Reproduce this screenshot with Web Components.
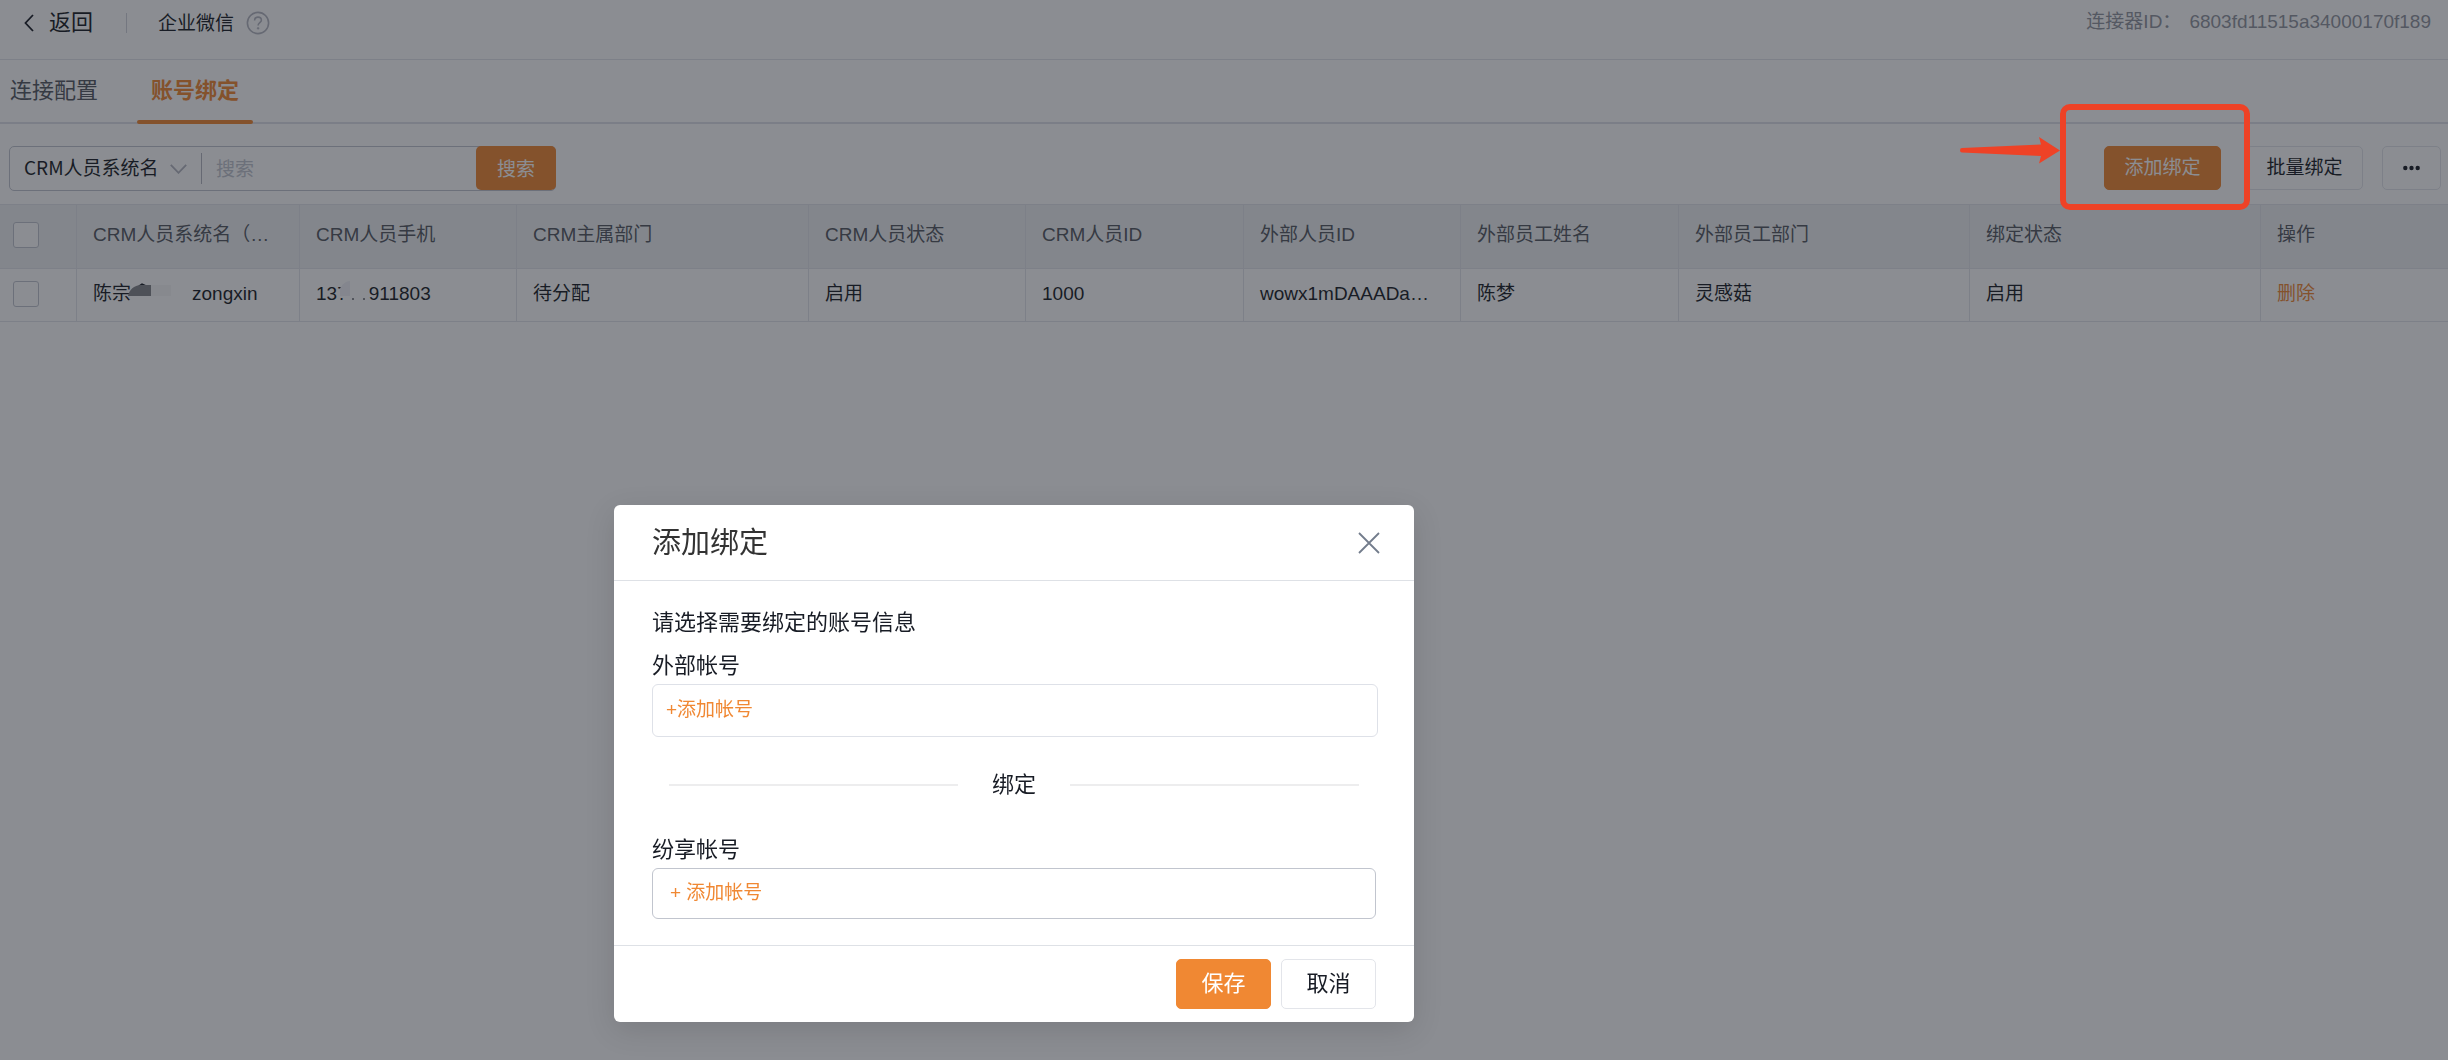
<!DOCTYPE html>
<html lang="zh-CN">
<head>
<meta charset="utf-8">
<title>账号绑定</title>
<style>
  html, body { margin: 0; height: 100%; }
  body {
    font: 19px/28px "Liberation Sans", "Noto Sans CJK SC", sans-serif;
    color: #181c25;
    background: #fff;
    --brand: #f08833;
    --line: #e3e5ea;
    --muted: #91959e;
    --cjk: "Noto Sans CJK SC", sans-serif;
  }
</style>
</head>
<body>
<connector-page></connector-page>

<script>
const define = (name, html, setup) => {
  const tpl = document.createElement('template');
  tpl.innerHTML = '<style>*{box-sizing:border-box}button,input,select{font:inherit;color:inherit;margin:0}button{cursor:pointer}</style>' + html;
  customElements.define(name, class extends HTMLElement {
    constructor() {
      super();
      this.attachShadow({ mode: 'open' }).append(tpl.content.cloneNode(true));
    }
    connectedCallback() { if (setup) setup(this, this.shadowRoot); }
  });
};

define('ui-button', `
  <style>
    :host { display: inline-flex; }
    button { display: flex; align-items: center; justify-content: center; height: 44px; min-width: 59px; padding: 0 19px; border: 1px solid var(--line); border-radius: 5px; background: #fff; white-space: nowrap; }
    :host([wide]) button { min-width: 117px; }
    :host([primary]) button { background: var(--brand); border-color: var(--brand); color: #fff; }
    :host([large]) button { height: 50px; min-width: 95px; font-size: 22px; }
    svg, ::slotted(svg) { display: block; }
  </style>
  <button type="button"><slot></slot></button>`,
  (el, root) => {
    if (el.hasAttribute('label')) root.querySelector('button').setAttribute('aria-label', el.getAttribute('label'));
  });

define('page-header', `
  <style>
    :host { display: flex; align-items: center; height: 60px; padding: 0 17px 14px 24px; border-bottom: 1px solid var(--line); }
    a { display: flex; align-items: center; gap: 15px; color: inherit; text-decoration: none; font-size: 22px; }
    i { width: 1px; height: 20px; background: #d0d3da; margin: 0 31px 0 33px; }
    h1 { margin: 0 12px 0 0; padding-top: 2px; font-size: 19px; font-weight: 400; }
    svg { display: block; }
    dl { display: flex; gap: 8px; margin: 0 0 0 auto; padding-bottom: 2px; color: var(--muted); }
    dd { margin: 0; }
  </style>
  <a href="#back">
    <svg width="10" height="18" viewBox="0 0 10 18" fill="none" stroke="currentColor" stroke-width="1.8"><path d="M9 1 1.5 9 9 17"/></svg>
    <span>返回</span>
  </a>
  <i></i>
  <h1>企业微信</h1>
  <svg width="24" height="24" viewBox="0 0 24 24" fill="none" stroke="#b4b6c0" stroke-width="1.6"><circle cx="12" cy="12" r="10.6"/><path d="M8.6 9.4c0-2 1.500-3.300 3.400-3.300s3.400 1.300 3.400 3.100c0 2.400-3.300 2.600-3.300 5.200"/><circle cx="12.100" cy="17.300" r=".9" fill="#b4b6c0" stroke-width=".6"/></svg>
  <dl><dt>连接器ID：</dt><dd>6803fd11515a34000170f189</dd></dl>`);

define('tab-bar', `
  <style>
    :host { display: block; box-shadow: inset 0 -2px #dee1e8; }
    nav { display: flex; gap: 25px; }
    a { height: 64px; padding: 0 14px; line-height: 62px; font-size: 22px; color: #545861; text-decoration: none; }
    a:first-child { padding-left: 10px; }
    a[aria-current] { color: var(--brand); font-weight: 700; position: relative; }
    a[aria-current]::after { content: ""; position: absolute; inset: auto 0 0; height: 4px; border-radius: 2px; background: var(--brand); }
  </style>
  <nav><a href="#config">连接配置</a><a href="#bind" aria-current="page">账号绑定</a></nav>`);

define('search-box', `
  <style>
    :host { display: flex; width: 547px; height: 45px; border: 1px solid #c1c5ce; border-radius: 5px; font-family: var(--cjk); }
    .pick { display: flex; align-items: center; width: 192px; margin: 6px 0; border-right: 1px solid #b4b6c0; position: relative; }
    select { appearance: none; border: 0; background: none; width: 100%; padding: 0 0 3px 14px; outline: 0; line-height: 28px; }
    svg { position: absolute; right: 14px; pointer-events: none; }
    input { flex: 1; min-width: 0; border: 0; background: none; padding: 0 14px 2px; outline: 0; }
    input::placeholder { color: #c1c5ce; opacity: 1; }
    button { width: 80px; margin: -1px -1px 0 0; border: 0; border-radius: 5px; background: var(--brand); color: #fff; }
  </style>
  <div class="pick">
    <select aria-label="搜索字段"><option>CRM人员系统名</option></select>
    <svg width="17" height="10" viewBox="0 0 17 10" fill="none" stroke="#b4b6c0" stroke-width="1.8"><path d="m.8.8 7.700 8 7.700-8"/></svg>
  </div>
  <input type="text" placeholder="搜索" aria-label="搜索">
  <button type="button">搜索</button>`);

define('tool-bar', `
  <style>
    :host { display: flex; align-items: flex-start; padding: 22px 7px 13px 9px; }
    .actions { display: flex; margin-left: auto; }
    .batch { margin: 0 19px 0 25px; }
  </style>
  <search-box></search-box>
  <div class="actions">
    <ui-button primary wide>添加绑定</ui-button>
    <ui-button class="batch" wide>批量绑定</ui-button>
    <ui-button label="更多"><svg width="17" height="6" viewBox="0 0 17 6" fill="currentColor"><circle cx="2.300" cy="3" r="2.200"/><circle cx="8.500" cy="3" r="2.200"/><circle cx="14.700" cy="3" r="2.200"/></svg></ui-button>
  </div>`);

define('binding-table', `
  <style>
    :host { display: block; }
    table { width: 100%; table-layout: fixed; border-collapse: separate; border-spacing: 0; }
    th, td { padding: 0 16px; text-align: left; font-weight: 400; border: 0 solid var(--line); border-width: 0 1px 1px 0; white-space: nowrap; }
    th { height: 65px; padding-bottom: 4px; background: #eef1f3; color: #545861; border-top-width: 1px; }
    td { height: 53px; padding-bottom: 3px; }
    th:last-child, td:last-child { border-right: 0; }
    th:first-child, td:first-child { padding-left: 13px; }
    input { appearance: none; display: block; width: 26px; height: 26px; border: 1px solid #c1c5ce; border-radius: 3px; background: #fff; }
    a { color: var(--brand); text-decoration: none; }
    .mask { display: inline-block; height: 20px; vertical-align: middle; position: relative; }
    .mask svg { position: absolute; left: 0; top: 0; overflow: visible; }
    .name { width: 61px; } .tel { width: 21px; }
  </style>
  <table>
    <colgroup><col style="width:77px"><col style="width:223px"><col style="width:217px"><col style="width:292px"><col style="width:217px"><col style="width:218px"><col style="width:217px"><col style="width:218px"><col style="width:291px"><col style="width:291px"><col></colgroup>
    <thead><tr>
      <th><input type="checkbox" aria-label="全选"></th>
      <th>CRM人员系统名（…</th><th>CRM人员手机</th><th>CRM主属部门</th><th>CRM人员状态</th><th>CRM人员ID</th><th>外部人员ID</th><th>外部员工姓名</th><th>外部员工部门</th><th>绑定状态</th><th>操作</th>
    </tr></thead>
    <tbody><tr>
      <td><input type="checkbox" aria-label="选择此行"></td>
      <td>陈宗<span class="mask name"><svg width="61" height="20"><path d="M8 2 11 0l4 2" fill="none" stroke="#181c25" stroke-width="1.500"/><path d="M-3 12C-2 6 3 1 10 1H20V12Z" fill="#84868a"/><path d="M20 1H40V12H20Z" fill="#f7f7f7"/></svg></span>zongxin</td>
      <td>137<span class="mask tel"><svg width="21" height="20"><path d="M-8 14V6C-7 0-2-3 4-3H13C19-2 22 2 21 8L19 14Z" fill="#fff"/><path d="M-8 12V5C-6 0-2-3 2-3V12Z" fill="#f0f1f6"/><path d="M4 15h2M15 15h2" stroke="#181c25"/></svg></span>911803</td>
      <td>待分配</td><td>启用</td><td>1000</td><td>wowx1mDAAADa…</td><td>陈梦</td><td>灵感菇</td><td>启用</td><td><a href="#delete">删除</a></td>
    </tr></tbody>
  </table>`);

define('account-field', `
  <style>
    :host { display: block; }
    .label { font-size: 22px; line-height: 32px; padding-bottom: 2px; }
    .box { height: 51px; border: 1px solid #c1c5ce; border-radius: 6px; padding: 10px 17px; }
    :host([light]) .box { height: 53px; border-color: #dee1e8; padding: 11px 13px; margin-right: -2px; }
    button { border: 0; padding: 0; background: none; color: var(--brand); display: block; line-height: 28px; }
  </style>
  <div class="label" id="l"><slot name="label"></slot></div>
  <div class="box" role="group" aria-labelledby="l"><button type="button"><slot></slot></button></div>`);

define('modal-dialog', `
  <style>
    :host { display: block; width: 800px; background: #fff; border-radius: 6px; box-shadow: 0 8px 30px rgba(0,0,0,.12); }
    header { display: flex; align-items: center; justify-content: space-between; height: 76px; padding: 0 34px 0 38px; border-bottom: 1px solid #dee1e6; }
    h2 { margin: 0; font-size: 29px; line-height: 40px; font-weight: 400; color: #333; }
    header button { border: 0; background: none; padding: 0; width: 22px; height: 22px; }
    svg { display: block; }
    main { padding: 26px 38px; }
    footer { display: flex; justify-content: flex-end; gap: 10px; padding: 13px 38px; border-top: 1px solid #dee1e6; }
  </style>
  <header><h2><slot name="title"></slot></h2><button type="button" aria-label="关闭"><svg width="22" height="22" viewBox="0 0 22 22" stroke="#737c8c" stroke-width="1.8"><path d="M1 1 21 21M21 1 1 21"/></svg></button></header>
  <main><slot></slot></main>
  <footer><slot name="footer"></slot></footer>`);

define('bind-divider', `
  <style>
    :host { display: flex; align-items: center; gap: 34px; font-size: 22px; line-height: 32px; padding: 0 17px; }
    :host::before, :host::after { content: ""; flex: 1; height: 2px; background: #ededee; }
  </style>
  <slot></slot>`);

define('callout-mark', `
  <style>
    :host { display: flex; align-items: flex-start; pointer-events: none; }
    svg { display: block; margin-top: 33px; }
    div { box-sizing: border-box; width: 190px; height: 106px; border: 6px solid #ee4226; border-radius: 10px; }
  </style>
  <svg width="100" height="27" viewBox="0 0 100 27" fill="#ee4226"><path d="M2 11 81 7.500 79 0 100 13.500 79 26.500 81 19 2 15.500Q0 15.500 0 13.200 0 11 2 11Z"/></svg>
  <div></div>`);

define('connector-page', `
  <style>
    :host { display: block; position: relative; min-height: 100%; }
    .veil { position: fixed; inset: 0; background: rgba(24,28,37,.5); }
    modal-dialog { position: absolute; left: 614px; top: 505px; }
    callout-mark { position: absolute; right: 198px; top: 104px; }
    p { margin: 0 0 11px; font-size: 22px; line-height: 32px; }
    bind-divider { margin: 32px 0 33px; }
  </style>
  <page-header></page-header>
  <tab-bar></tab-bar>
  <tool-bar></tool-bar>
  <binding-table></binding-table>
  <div class="veil"></div>
  <modal-dialog role="dialog" aria-label="添加绑定">
    <span slot="title">添加绑定</span>
    <p>请选择需要绑定的账号信息</p>
    <account-field light><span slot="label">外部帐号</span>+添加帐号</account-field>
    <bind-divider>绑定</bind-divider>
    <account-field><span slot="label">纷享帐号</span>+ 添加帐号</account-field>
    <ui-button slot="footer" primary large>保存</ui-button>
    <ui-button slot="footer" large>取消</ui-button>
  </modal-dialog>
  <callout-mark></callout-mark>`);
</script>
</body>
</html>
